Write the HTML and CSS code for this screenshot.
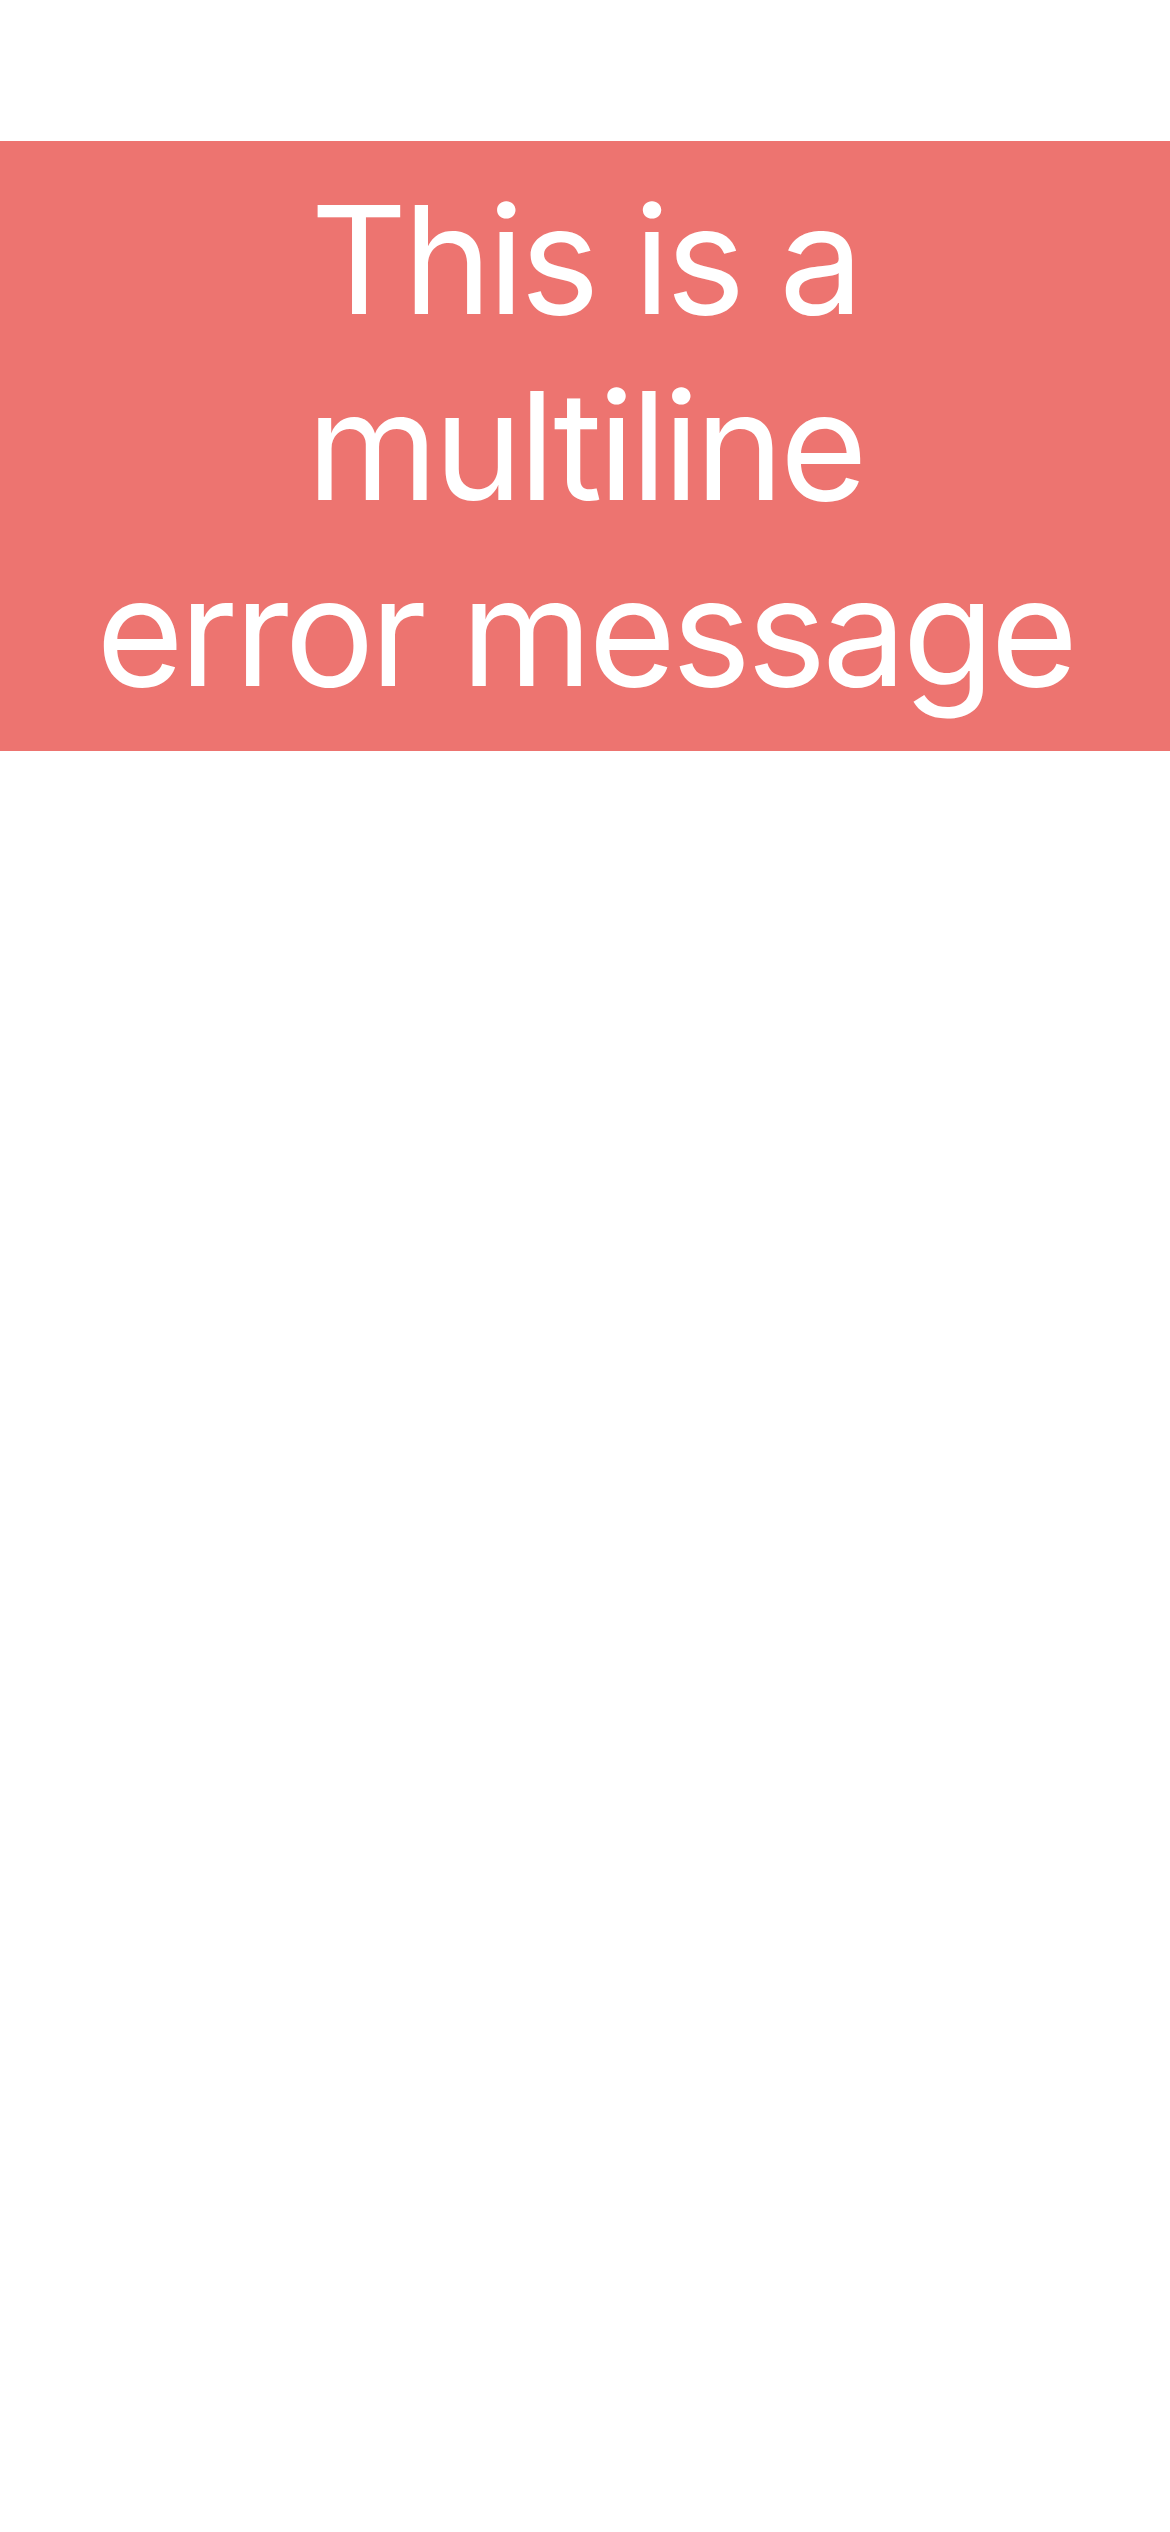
FILE: index.html
```html
<!DOCTYPE html>
<html lang="en">
<head>
<meta charset="utf-8">
<title>Error</title>
<link rel="stylesheet" href="styles.css">
</head>
<body>
<div class="screen">
  <div class="safe-top"></div>
  <div class="error-banner">
    <p class="error-text">This is a<br>multiline<br>error message</p>
  </div>
</div>
</body>
</html>
```

FILE: styles.css
```css
html, body {
  margin: 0;
  padding: 0;
  background: #ffffff;
}
.screen {
  width: 1170px;
  min-height: 2532px;
  display: flex;
  flex-direction: column;
}
.safe-top {
  height: 141px;
}
.error-banner {
  background: #ed7470;
  padding: 26px 40px;
}
.error-text {
  margin: 0;
  font-family: Inter, "Noto Sans", sans-serif;
  font-size: 150px;
  line-height: 186px;
  letter-spacing: -4px;
  color: #ffffff;
  text-align: center;
  font-weight: 400;
}
```
